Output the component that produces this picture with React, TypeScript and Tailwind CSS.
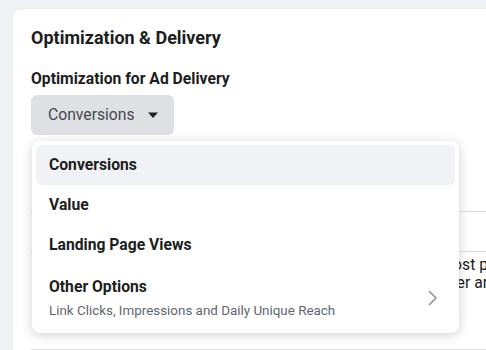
import React from "react";

export default function App() {
  return (
    <div
      className="w-[486px] h-[350px] overflow-hidden bg-[#f0f2f5] pl-[13px] pt-[9px]"
      style={{ fontFamily: "Roboto, 'Liberation Sans', sans-serif" }}
    >
      <div className="relative w-[490px] h-[360px] bg-white rounded-tl-[8px] shadow-[0_0_1px_rgba(0,0,0,0.15)] pl-[18px] pt-[18px]">
        <div className="text-[18px] leading-[22px] font-bold text-[#1c1e21]">Optimization &amp; Delivery</div>
        <div className="mt-[20px] text-[15.7px] leading-[20px] font-bold text-[#1c1e21]">Optimization for Ad Delivery</div>
        <div className="mt-[6px] flex">
          <button className="h-[40px] w-[143px] rounded-[6px] bg-[#dfe0e3] pl-[17px] flex items-center gap-[13px] text-[15.7px] text-[#444950]">
            <span>Conversions</span>
            <svg width="10" height="6" viewBox="0 0 10 6">
              <path d="M0 0.5 L10 0.5 L5 6 Z" fill="#1c1e21" />
            </svg>
          </button>
        </div>
        {/* underlying content */}
        <div className="mr-[-20px] h-[77px] border-b border-[#dadde1]" />
        <div className="mr-[-20px] h-[40px] border-b border-[#dadde1]" />
        <div className="mt-[4px] ml-[6px] w-[451px] overflow-hidden text-[15.7px] leading-[18px] text-[#1c1e21]">
          <div className="flex justify-end whitespace-nowrap">
            <span>We'll deliver your ads to the people in your audience who are most p</span>
          </div>
          <div className="flex justify-end whitespace-nowrap">
            <span>likely to take the action you want at the lowest cost. Learn more about other ar</span>
          </div>
        </div>
        <div className="mt-[57px] mr-[-20px] border-t border-[#dadde1]" />

        {/* dropdown menu */}
        <div className="absolute left-[19px] top-[132px] w-[427px] rounded-[8px] bg-white p-[4px] shadow-[0_2px_12px_rgba(0,0,0,0.18)]">
          <div className="h-[40px] rounded-[6px] bg-[#f0f2f5] flex items-center pl-[13px] text-[15.7px] font-bold text-[#1c1e21]">
            Conversions
          </div>
          <div className="h-[40px] flex items-center pl-[13px] text-[15.7px] font-bold text-[#1c1e21]">Value</div>
          <div className="h-[40px] flex items-center pl-[13px] text-[15.7px] font-bold text-[#1c1e21]">Landing Page Views</div>
          <div className="flex items-center pl-[13px] pr-[17px] pt-[12px] pb-[10px]">
            <div className="flex-1">
              <div className="text-[15.7px] leading-[20px] font-bold text-[#1c1e21]">Other Options</div>
              <div className="mt-[6px] text-[13.4px] leading-[16px] text-[#606770]">
                Link Clicks, Impressions and Daily Unique Reach
              </div>
            </div>
            <svg width="10" height="16" viewBox="0 0 10 16">
              <path d="M1.5 1.5 L8 8 L1.5 14.5" fill="none" stroke="#8d949e" strokeWidth="1.6" strokeLinecap="round" strokeLinejoin="round" />
            </svg>
          </div>
        </div>
      </div>
    </div>
  );
}
